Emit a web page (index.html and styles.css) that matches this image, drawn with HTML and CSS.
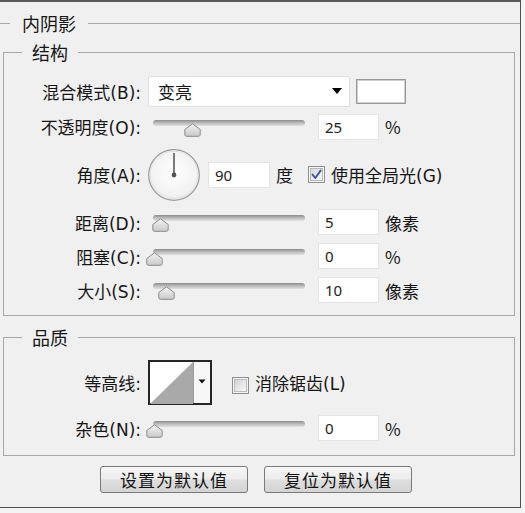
FILE: index.html
```html
<!DOCTYPE html>
<html lang="zh-CN">
<head>
<meta charset="utf-8">
<title>内阴影</title>
<link rel="stylesheet" href="styles.css">
</head>
<body>
<div class="dialog">
  <fieldset class="group-outer">
    <legend class="legend-outer">内阴影</legend>

    <fieldset class="group">
      <legend class="legend">结构</legend>

      <div class="row row-blend">
        <span class="label">混合模式(B):</span>
        <div class="select"><span class="select-text">变亮</span><span class="caret"></span></div>
        <div class="swatch"></div>
      </div>

      <div class="row row-opacity">
        <span class="label">不透明度(O):</span>
        <div class="slider">
          <div class="track"></div>
          <svg class="thumb" style="left:36px" viewBox="0 0 17 14" width="17" height="14"><defs><linearGradient id="tg1" x1="0" y1="0" x2="0" y2="1"><stop offset="0" stop-color="#f4f4f4"/><stop offset="1" stop-color="#c9c9c9"/></linearGradient></defs><path d="M8.5 0.8 L16.2 6.5 L16.2 11.5 Q16.2 13.3 14.4 13.3 L2.6 13.3 Q0.8 13.3 0.8 11.5 L0.8 6.5 Z" fill="url(#tg1)" stroke="#8a8a8a" stroke-width="1"/></svg>
        </div>
        <div class="field">25</div>
        <span class="unit">%</span>
      </div>

      <div class="row row-angle">
        <span class="label">角度(A):</span>
        <svg class="dial" viewBox="0 0 52 52" width="52" height="52"><defs><radialGradient id="dg" cx="0.5" cy="0.45" r="0.6"><stop offset="0" stop-color="#ffffff"/><stop offset="0.75" stop-color="#f2f2f2"/><stop offset="1" stop-color="#dedede"/></radialGradient></defs><circle cx="26" cy="26" r="25.3" fill="url(#dg)" stroke="#9a9a9a" stroke-width="1.2"/><circle cx="26" cy="26" r="23.8" fill="none" stroke="#e4e4e4" stroke-width="1"/><line x1="26" y1="26" x2="26" y2="4" stroke="#5a5a5a" stroke-width="1.6"/><circle cx="26" cy="26" r="2.4" fill="#555"/></svg>
        <div class="field field-angle">90</div>
        <span class="unit">度</span>
        <svg class="check" viewBox="0 0 17 17" width="17" height="17"><defs><linearGradient id="cg1" x1="0" y1="0" x2="1" y2="1"><stop offset="0" stop-color="#d6d6d6"/><stop offset="1" stop-color="#fbfbfb"/></linearGradient></defs><rect x="0.5" y="0.5" width="16" height="16" fill="#f6f6f6" stroke="#8f8f8f"/><rect x="2.5" y="2.5" width="12" height="12" fill="url(#cg1)" stroke="#b8b8b8"/><path d="M4.6 8.6 L7.3 12 L12.6 4.6" fill="none" stroke="#3f54a3" stroke-width="1.9" stroke-linecap="round" stroke-linejoin="round"/></svg>
        <span class="check-text">使用全局光(G)</span>
      </div>

      <div class="row row-distance">
        <span class="label">距离(D):</span>
        <div class="slider">
          <div class="track"></div>
          <svg class="thumb" style="left:4px" viewBox="0 0 17 14" width="17" height="14"><path d="M8.5 0.8 L16.2 6.5 L16.2 11.5 Q16.2 13.3 14.4 13.3 L2.6 13.3 Q0.8 13.3 0.8 11.5 L0.8 6.5 Z" fill="url(#tg1)" stroke="#8a8a8a" stroke-width="1"/></svg>
        </div>
        <div class="field">5</div>
        <span class="unit">像素</span>
      </div>

      <div class="row row-choke">
        <span class="label">阻塞(C):</span>
        <div class="slider">
          <div class="track"></div>
          <svg class="thumb" style="left:-2px" viewBox="0 0 17 14" width="17" height="14"><path d="M8.5 0.8 L16.2 6.5 L16.2 11.5 Q16.2 13.3 14.4 13.3 L2.6 13.3 Q0.8 13.3 0.8 11.5 L0.8 6.5 Z" fill="url(#tg1)" stroke="#8a8a8a" stroke-width="1"/></svg>
        </div>
        <div class="field">0</div>
        <span class="unit">%</span>
      </div>

      <div class="row row-size">
        <span class="label">大小(S):</span>
        <div class="slider">
          <div class="track"></div>
          <svg class="thumb" style="left:10px" viewBox="0 0 17 14" width="17" height="14"><path d="M8.5 0.8 L16.2 6.5 L16.2 11.5 Q16.2 13.3 14.4 13.3 L2.6 13.3 Q0.8 13.3 0.8 11.5 L0.8 6.5 Z" fill="url(#tg1)" stroke="#8a8a8a" stroke-width="1"/></svg>
        </div>
        <div class="field">10</div>
        <span class="unit">像素</span>
      </div>
    </fieldset>

    <fieldset class="group group-quality">
      <legend class="legend">品质</legend>

      <div class="row row-contour">
        <span class="label">等高线:</span>
        <svg class="contour" viewBox="0 0 64 45" width="64" height="45"><rect x="1" y="1" width="62" height="43" fill="#ffffff" stroke="#262626" stroke-width="2"/><polygon points="2,44 45,2 45,44" fill="#a9a9a9"/><rect x="45" y="2" width="17" height="41" fill="#f7f7f7"/><line x1="45.5" y1="2" x2="45.5" y2="43" stroke="#9c9c9c" stroke-width="1"/><polygon points="50.5,19.5 57.5,19.5 54,23.5" fill="#111"/></svg>
        <svg class="check check-aa" viewBox="0 0 17 17" width="17" height="17"><defs><linearGradient id="cg2" x1="0" y1="0" x2="1" y2="1"><stop offset="0" stop-color="#d2d2d2"/><stop offset="1" stop-color="#fafafa"/></linearGradient></defs><rect x="0.5" y="0.5" width="16" height="16" fill="#f6f6f6" stroke="#8f8f8f"/><rect x="2.5" y="2.5" width="12" height="12" fill="url(#cg2)" stroke="#bcbcbc"/></svg>
        <span class="check-text">消除锯齿(L)</span>
      </div>

      <div class="row row-noise">
        <span class="label">杂色(N):</span>
        <div class="slider">
          <div class="track"></div>
          <svg class="thumb" style="left:-2px" viewBox="0 0 17 14" width="17" height="14"><path d="M8.5 0.8 L16.2 6.5 L16.2 11.5 Q16.2 13.3 14.4 13.3 L2.6 13.3 Q0.8 13.3 0.8 11.5 L0.8 6.5 Z" fill="url(#tg1)" stroke="#8a8a8a" stroke-width="1"/></svg>
        </div>
        <div class="field">0</div>
        <span class="unit">%</span>
      </div>
    </fieldset>

    <div class="buttons">
      <button class="btn" type="button">设置为默认值</button>
      <button class="btn" type="button">复位为默认值</button>
    </div>
  </fieldset>
</div>
</body>
</html>
```

FILE: styles.css
```css
* { box-sizing: border-box; }

html, body { margin: 0; padding: 0; }

body {
  width: 525px;
  height: 513px;
  overflow: hidden;
  background: #f4f4f4;
  font-family: "Noto Sans CJK SC", "Noto Sans", sans-serif;
  color: #161616;
}

.dialog {
  width: 521px;
  height: 508px;
  background: #f0f0f0;
  border-top: 2px solid #5a5a5a;
  border-right: 1px solid #4e4e4e;
  border-bottom: 1px solid #4e4e4e;
  padding: 9px 0 0 0;
}

.group-outer {
  margin: 0;
  min-width: 0;
  border: 0;
  border-top: 1px solid #a8a8a8;
  padding: 6px 5px 0 3px;
}

.legend-outer {
  margin-left: 7px;
  padding: 0 12px;
  font-size: 18px;
  line-height: 24px;
}

.group {
  margin: 0;
  min-width: 0;
  border: 1px solid #a8a8a8;
  padding: 11px 0 7px 0;
}

.group-quality {
  margin-top: 10px;
  padding: 10px 0 6px 0;
}

.legend {
  margin-left: 18px;
  padding: 0 10px;
  font-size: 18px;
  line-height: 22px;
}

.row {
  display: flex;
  align-items: center;
  height: 34px;
  font-size: 16px;
}

.row-blend { height: 34px; }
.row-opacity { height: 37px; }
.row-angle { height: 59px; }
.row-distance { height: 36px; }
.row-choke { height: 32px; }
.row-size { height: 36px; }
.row-contour { height: 49px; }
.row-noise { height: 42px; }

.label {
  flex: none;
  width: 137px;
  margin-right: 7px;
  text-align: right;
  white-space: nowrap;
  font-family: "DejaVu Sans", "Noto Sans CJK SC", sans-serif;
  font-size: 17px;
}

.select {
  flex: none;
  width: 202px;
  height: 31px;
  background: #fff;
  border: 1px solid #dedede;
  border-radius: 2px;
  display: flex;
  align-items: center;
  justify-content: space-between;
  padding: 0 7px 0 9px;
  font-size: 17px;
}

.caret {
  width: 0;
  height: 0;
  border-left: 5px solid transparent;
  border-right: 5px solid transparent;
  border-top: 6px solid #000;
}

.swatch {
  flex: none;
  width: 50px;
  height: 25px;
  margin-left: 6px;
  background: #fff;
  border: 1px solid #989898;
  box-shadow: inset 0 0 0 1px #cfcfcf;
}

.slider {
  flex: none;
  position: relative;
  width: 162px;
  height: 18px;
  margin-top: 4px;
}

.track {
  height: 6px;
  margin: 0 5px;
  border-radius: 3px;
  background: linear-gradient(#8c8c8c, #bdbdbd 50%, #e0e0e0);
}

.thumb {
  position: absolute;
  top: 3px;
}

.field {
  flex: none;
  width: 61px;
  height: 26px;
  margin-left: 8px;
  padding-left: 6px;
  background: #fff;
  border: 1px solid #e4e4e4;
  font-family: "Noto Sans", sans-serif;
  font-size: 15px;
  line-height: 24px;
  color: #222;
}

.field-angle {
  width: 62px;
}

.unit {
  flex: none;
  margin-left: 6px;
  font-size: 17px;
}

.dial {
  flex: none;
  display: block;
}

.check {
  flex: none;
  display: block;
  margin-left: 15px;
}

.check-aa {
  margin-left: 20px;
  margin-top: 5px;
}

.check-text {
  margin-left: 6px;
  white-space: nowrap;
  font-family: "DejaVu Sans", "Noto Sans CJK SC", sans-serif;
  font-size: 17px;
}

.contour {
  flex: none;
  display: block;
}

.buttons {
  display: flex;
  justify-content: center;
  gap: 16px;
  margin-top: 10px;
  padding-right: 6px;
}

.btn {
  width: 148px;
  height: 27px;
  margin: 0;
  padding: 0;
  border: 1px solid #7a7a7a;
  border-radius: 3px;
  background: linear-gradient(#f7f7f7, #ececec 48%, #dedede 52%, #d4d4d4);
  font-family: "Noto Sans CJK SC", sans-serif;
  font-size: 17px;
  letter-spacing: 1px;
  line-height: 25px;
  color: #111;
}
```
